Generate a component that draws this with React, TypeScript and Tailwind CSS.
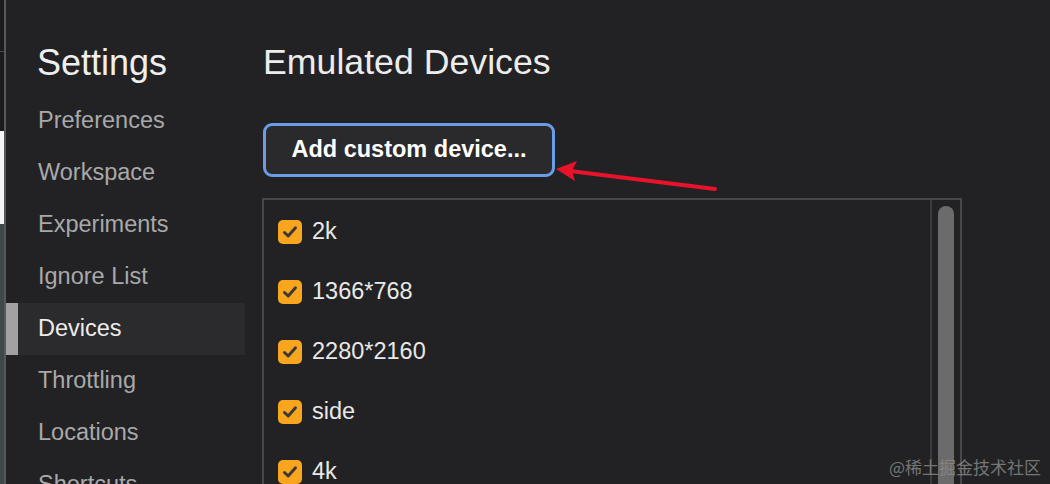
import React from "react";

const sidebarItems = [
  "Preferences",
  "Workspace",
  "Experiments",
  "Ignore List",
  "Devices",
  "Throttling",
  "Locations",
  "Shortcuts",
];

const devices = ["2k", "1366*768", "2280*2160", "side", "4k", "iPad"];

function Check() {
  return (
    <div className="w-[24px] h-[24px] rounded-[5px] bg-[#f9a61e] flex items-center justify-center shrink-0">
      <svg width="16" height="16" viewBox="0 0 16 16">
        <path d="M2.5 8.5 L6.2 12 L13.5 3.8" fill="none" stroke="#3a3a3a" strokeWidth="3" strokeLinecap="round" strokeLinejoin="round" />
      </svg>
    </div>
  );
}

export default function App() {
  return (
    <div
      className="relative w-[1050px] h-[484px] overflow-hidden flex bg-[#222224]"
      style={{ fontFamily: '"Liberation Sans", Arial, Helvetica, sans-serif' }}
    >
      {/* left edge strip (window behind) */}
      <div className="w-[4px] h-full flex flex-col shrink-0">
        <div className="h-[51px] bg-[#1b1b1d]" />
        <div className="h-[1px] bg-[#4a4a4a]" />
        <div className="h-[79px] bg-[#1b1b1d]" />
        <div className="h-[93px] bg-[#f4f4f4]" />
        <div className="flex-1 bg-[#3c4849]" />
      </div>
      <div className="w-[2px] h-full bg-[#58585a] shrink-0" />

      {/* sidebar */}
      <div className="w-[240px] shrink-0 flex flex-col">
        <div className="pt-[41px] pl-[31px] h-[85px] text-[36px] leading-[44px] text-[#efefef]">Settings</div>
        <div className="mt-[10px] flex flex-col">
          {sidebarItems.map((item) =>
            item === "Devices" ? (
              <div key={item} className="h-[52px] flex">
                <div className="w-[12px] bg-[#a2a2a2]" />
                <div className="w-[227px] bg-[#2b2b2d] flex items-center pl-[20px] text-[23.5px] text-[#ececec]">
                  {item}
                </div>
              </div>
            ) : (
              <div key={item} className="h-[52px] flex items-center pl-[32px] text-[23.5px] text-[#a8a9aa]">
                {item}
              </div>
            )
          )}
        </div>
      </div>

      {/* main */}
      <div className="flex-1 flex flex-col pl-[16px]">
        <div className="pt-[40px] pl-[1px] h-[84px] text-[35.7px] leading-[44px] text-[#ececec]">Emulated Devices</div>
        <div className="mt-[17px] h-[2px] bg-[#4b4b4d]" />
        <div className="mt-[22px] pl-[1px]">
          <button className="w-[292px] h-[54px] rounded-[9px] border-[3px] border-[#6a9de6] bg-[#2a2a2c] text-[23.5px] font-bold text-white flex items-center justify-center">
            Add custom device...
          </button>
        </div>
        <div className="mt-[21px] w-[700px] flex-1 border-[2px] border-[#48484a] border-b-0 flex">
          <div className="flex-1 flex flex-col pl-[14px] pt-[2px]">
            {devices.map((d) => (
              <div key={d} className="h-[60px] shrink-0 flex items-center gap-[10px]">
                <Check />
                <span className="text-[23.5px] text-[#e8e8e8]">{d}</span>
              </div>
            ))}
          </div>
          <div className="w-[30px] border-l-[2px] border-[#3c3c3e] pt-[6px] flex justify-center">
            <div className="w-[16px] h-full rounded-t-full bg-[#6b6b6b]" />
          </div>
        </div>
      </div>

      {/* annotation arrow */}
      <svg className="absolute left-0 top-0 pointer-events-none" width="1050" height="484">
        <line x1="715" y1="189" x2="570" y2="171" stroke="#e8132b" strokeWidth="4" strokeLinecap="round" />
        <polygon points="556,169 577,161 572,171 575,181" fill="#e8132b" />
      </svg>

      {/* watermark */}
      <div
        className="absolute right-[9px] bottom-[5px] text-[17px] text-[#8a8a8a] opacity-80"
        style={{ fontFamily: '"Noto Sans CJK SC", "Liberation Sans", sans-serif' }}
      >
        @稀土掘金技术社区
      </div>
    </div>
  );
}
